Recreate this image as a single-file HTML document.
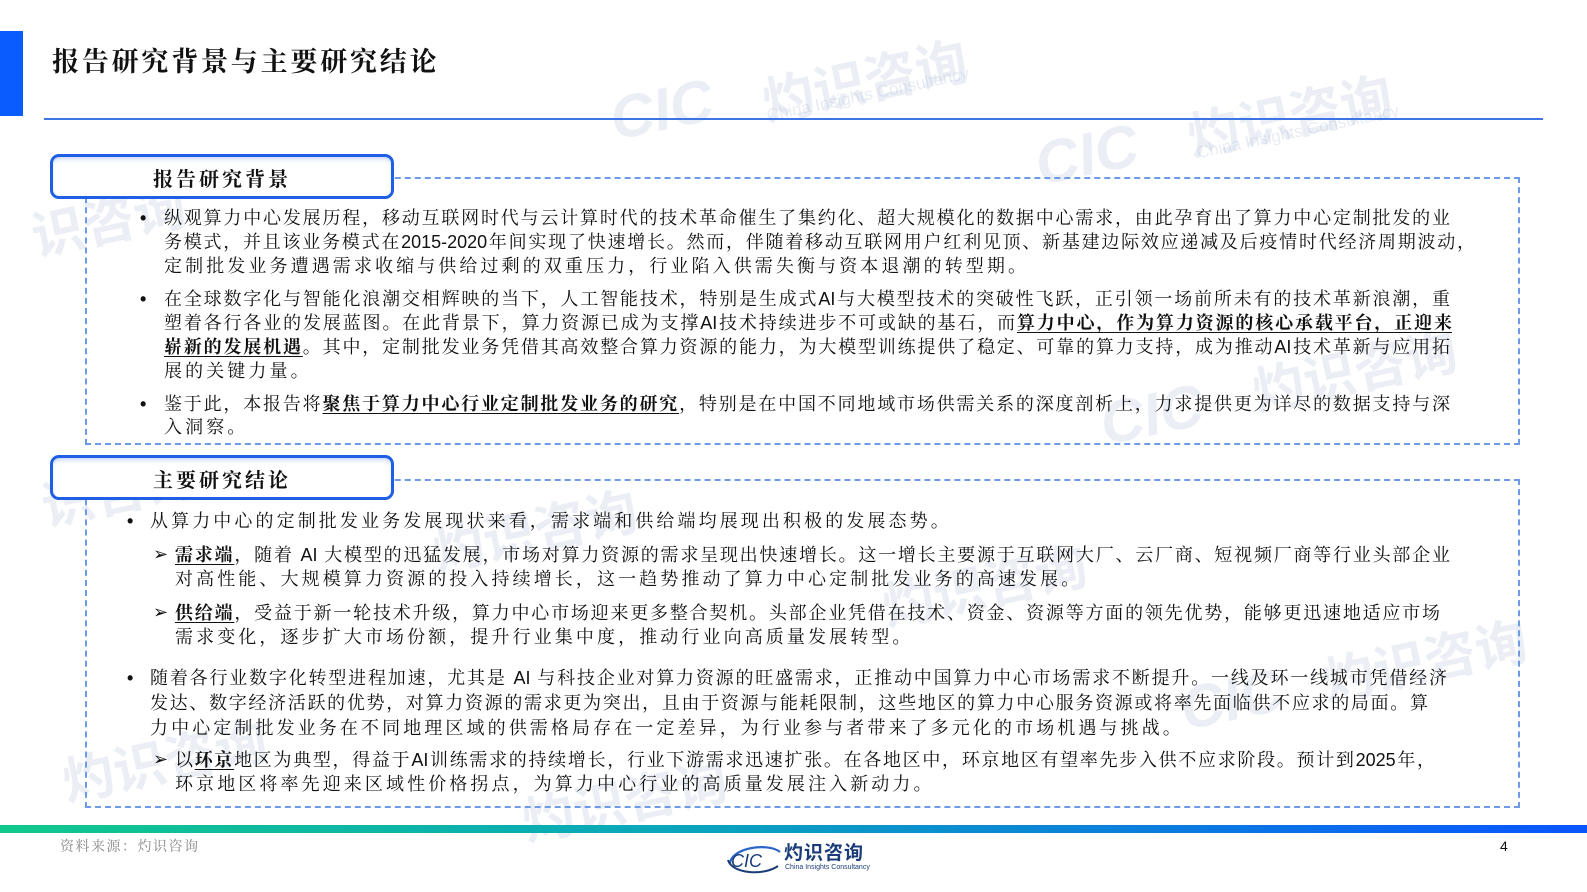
<!DOCTYPE html>
<html><head><meta charset="utf-8">
<style>
*{margin:0;padding:0;box-sizing:border-box}
body{width:1587px;height:892px;position:relative;overflow:hidden;background:#fff;font-family:"Liberation Sans","Noto Serif CJK SC",serif;color:#111}
.wm{position:absolute;color:rgba(170,188,215,0.24);font-family:"Liberation Sans","Noto Sans CJK SC",sans-serif;transform:rotate(-12deg);white-space:nowrap;font-weight:bold}
.wms{position:absolute;color:rgba(170,188,215,0.28);font-family:"Liberation Sans",sans-serif;transform:rotate(-12deg);white-space:nowrap}
.l{position:absolute;white-space:nowrap;font-size:18px;line-height:24px;height:24px;letter-spacing:0}
.j{text-align:justify;text-align-last:justify}
.b{font-weight:bold;text-decoration:underline;text-underline-offset:3px}
.dot{position:absolute;font-size:18px;line-height:24px;font-weight:bold}
.arr{position:absolute;font-size:18px;line-height:24px;font-family:"DejaVu Sans",sans-serif;font-weight:bold}
.tab{position:absolute;left:50px;width:344px;height:45px;border:3px solid #1f5fe6;border-radius:9px;background:#fff;box-shadow:inset 0 4px 6px -3px rgba(31,95,230,.35)}
.tab span{position:absolute;left:100px;top:6px;font-size:20px;font-weight:bold;letter-spacing:3px;font-family:"Liberation Serif","Noto Serif CJK SC",serif}
.box{position:absolute;border:2px dashed #6d9be8}
</style></head><body>

<!-- watermarks -->
<div class="wm" style="left:760px;top:40px;font-size:52px">灼识咨询</div>
<div class="wms" style="left:765px;top:85px;font-size:17px">China Insights Consultancy</div>
<div class="wm" style="left:1185px;top:75px;font-size:52px">灼识咨询</div>
<div class="wms" style="left:1195px;top:122px;font-size:17px">China Insights Consultancy</div>
<div class="wm" style="left:610px;top:75px;font-size:60px;font-style:italic">CIC</div>
<div class="wm" style="left:1035px;top:120px;font-size:60px;font-style:italic">CIC</div>
<div class="wm" style="left:30px;top:180px;font-size:52px">识咨询</div>
<div class="wm" style="left:1250px;top:330px;font-size:52px">灼识咨询</div>
<div class="wm" style="left:1100px;top:380px;font-size:60px;font-style:italic">CIC</div>
<div class="wm" style="left:40px;top:450px;font-size:52px">识咨询</div>
<div class="wm" style="left:430px;top:490px;font-size:52px">灼识咨询</div>
<div class="wm" style="left:880px;top:545px;font-size:52px">灼识咨询</div>
<div class="wm" style="left:1320px;top:620px;font-size:52px">灼识咨询</div>
<div class="wm" style="left:1180px;top:665px;font-size:60px;font-style:italic">CIC</div>
<div class="wm" style="left:60px;top:720px;font-size:52px">灼识咨询</div>
<div class="wm" style="left:520px;top:760px;font-size:52px">灼识咨询</div>

<!-- header -->
<div style="position:absolute;left:0;top:31px;width:23px;height:85px;background:#0a5cff"></div>
<div style="position:absolute;left:52px;top:40px;font-size:27px;font-weight:bold;letter-spacing:2.8px;font-family:'Liberation Serif','Noto Serif CJK SC',serif">报告研究背景与主要研究结论</div>
<div style="position:absolute;left:44px;top:118px;width:1499px;height:2px;background:#3d74e6"></div>

<!-- box 1 -->
<div class="box" style="left:85px;top:177px;width:1435px;height:268px"></div>
<div class="tab" style="top:154px"><span>报告研究背景</span></div>

<div class="dot" style="left:140px;top:206px">•</div>
<div class="l j" style="left:164px;top:206px;width:1286px">纵观算力中心发展历程，移动互联网时代与云计算时代的技术革命催生了集约化、超大规模化的数据中心需求，由此孕育出了算力中心定制批发的业</div>
<div class="l j" style="left:164px;top:230px;width:1311px">务模式，并且该业务模式在2015-2020年间实现了快速增长。然而，伴随着移动互联网用户红利见顶、新基建边际效应递减及后疫情时代经济周期波动，</div>
<div class="l" style="left:164px;top:254px;letter-spacing:3.1px">定制批发业务遭遇需求收缩与供给过剩的双重压力，行业陷入供需失衡与资本退潮的转型期。</div>

<div class="dot" style="left:140px;top:287px">•</div>
<div class="l j" style="left:164px;top:287px;width:1286px">在全球数字化与智能化浪潮交相辉映的当下，人工智能技术，特别是生成式AI与大模型技术的突破性飞跃，正引领一场前所未有的技术革新浪潮，重</div>
<div class="l j" style="left:164px;top:311px;width:1288px">塑着各行各业的发展蓝图。在此背景下，算力资源已成为支撑AI技术持续进步不可或缺的基石，而<span class="b">算力中心，作为算力资源的核心承载平台，正迎来</span></div>
<div class="l j" style="left:164px;top:335px;width:1286px"><span class="b">崭新的发展机遇</span>。其中，定制批发业务凭借其高效整合算力资源的能力，为大模型训练提供了稳定、可靠的算力支持，成为推动AI技术革新与应用拓</div>
<div class="l" style="left:164px;top:359px;letter-spacing:3.1px">展的关键力量。</div>

<div class="dot" style="left:140px;top:392px">•</div>
<div class="l j" style="left:164px;top:392px;width:1286px">鉴于此，本报告将<span class="b">聚焦于算力中心行业定制批发业务的研究</span>，特别是在中国不同地域市场供需关系的深度剖析上，力求提供更为详尽的数据支持与深</div>
<div class="l" style="left:164px;top:415px;letter-spacing:3.1px">入洞察。</div>

<!-- box 2 -->
<div class="box" style="left:85px;top:479px;width:1435px;height:329px"></div>
<div class="tab" style="top:455px"><span>主要研究结论</span></div>

<div class="dot" style="left:127px;top:509px">•</div>
<div class="l" style="left:150px;top:509px;letter-spacing:3.1px">从算力中心的定制批发业务发展现状来看，需求端和供给端均展现出积极的发展态势。</div>

<div class="arr" style="left:153px;top:543px">➢</div>
<div class="l j" style="left:175px;top:543px;width:1275px"><span class="b">需求端</span>，随着 AI 大模型的迅猛发展，市场对算力资源的需求呈现出快速增长。这一增长主要源于互联网大厂、云厂商、短视频厂商等行业头部企业</div>
<div class="l" style="left:175px;top:567px;letter-spacing:3.1px">对高性能、大规模算力资源的投入持续增长，这一趋势推动了算力中心定制批发业务的高速发展。</div>

<div class="arr" style="left:153px;top:601px">➢</div>
<div class="l j" style="left:175px;top:601px;width:1265px"><span class="b">供给端</span>，受益于新一轮技术升级，算力中心市场迎来更多整合契机。头部企业凭借在技术、资金、资源等方面的领先优势，能够更迅速地适应市场</div>
<div class="l" style="left:175px;top:625px;letter-spacing:3.1px">需求变化，逐步扩大市场份额，提升行业集中度，推动行业向高质量发展转型。</div>

<div class="dot" style="left:127px;top:666px">•</div>
<div class="l j" style="left:150px;top:666px;width:1297px">随着各行业数字化转型进程加速，尤其是 AI 与科技企业对算力资源的旺盛需求，正推动中国算力中心市场需求不断提升。一线及环一线城市凭借经济</div>
<div class="l j" style="left:150px;top:691px;width:1278px">发达、数字经济活跃的优势，对算力资源的需求更为突出，且由于资源与能耗限制，这些地区的算力中心服务资源或将率先面临供不应求的局面。算</div>
<div class="l" style="left:150px;top:716px;letter-spacing:3.1px">力中心定制批发业务在不同地理区域的供需格局存在一定差异，为行业参与者带来了多元化的市场机遇与挑战。</div>

<div class="arr" style="left:153px;top:748px">➢</div>
<div class="l j" style="left:175px;top:748px;width:1260px">以<span class="b">环京</span>地区为典型，得益于AI训练需求的持续增长，行业下游需求迅速扩张。在各地区中，环京地区有望率先步入供不应求阶段。预计到2025年，</div>
<div class="l" style="left:175px;top:772px;letter-spacing:3.1px">环京地区将率先迎来区域性价格拐点，为算力中心行业的高质量发展注入新动力。</div>

<!-- footer -->
<div style="position:absolute;left:0;top:825px;width:1587px;height:8px;background:linear-gradient(90deg,#10c88c 0%,#0aa8b8 40%,#0a7ae0 75%,#0a55ff 100%)"></div>
<div style="position:absolute;left:60px;top:836px;font-size:14px;color:#8a8a8a;letter-spacing:1.5px;font-family:'Liberation Serif','Noto Serif CJK SC',serif">资料来源：灼识咨询</div>
<svg style="position:absolute;left:724px;top:840px" width="60" height="36" viewBox="0 0 60 36">
<path d="M6 24 C6 8 44 2 56 12" fill="none" stroke="#2a66c8" stroke-width="2.2"/>
<path d="M4 20 C8 34 40 36 54 26" fill="none" stroke="#1b3c78" stroke-width="2"/>
<text x="7" y="27" font-family="Liberation Sans" font-style="italic" font-size="18" fill="#1b3c78">CIC</text>
</svg>
<div style="position:absolute;left:784px;top:838px;font-size:19px;font-weight:bold;color:#1b3c78;font-family:'Liberation Sans','Noto Sans CJK SC',sans-serif;letter-spacing:1px">灼识咨询</div>
<div style="position:absolute;left:785px;top:864px;font-size:7px;color:#1b3c78">China Insights Consultancy</div>
<div style="position:absolute;left:1500px;top:838px;font-size:14px">4</div>
</body></html>
